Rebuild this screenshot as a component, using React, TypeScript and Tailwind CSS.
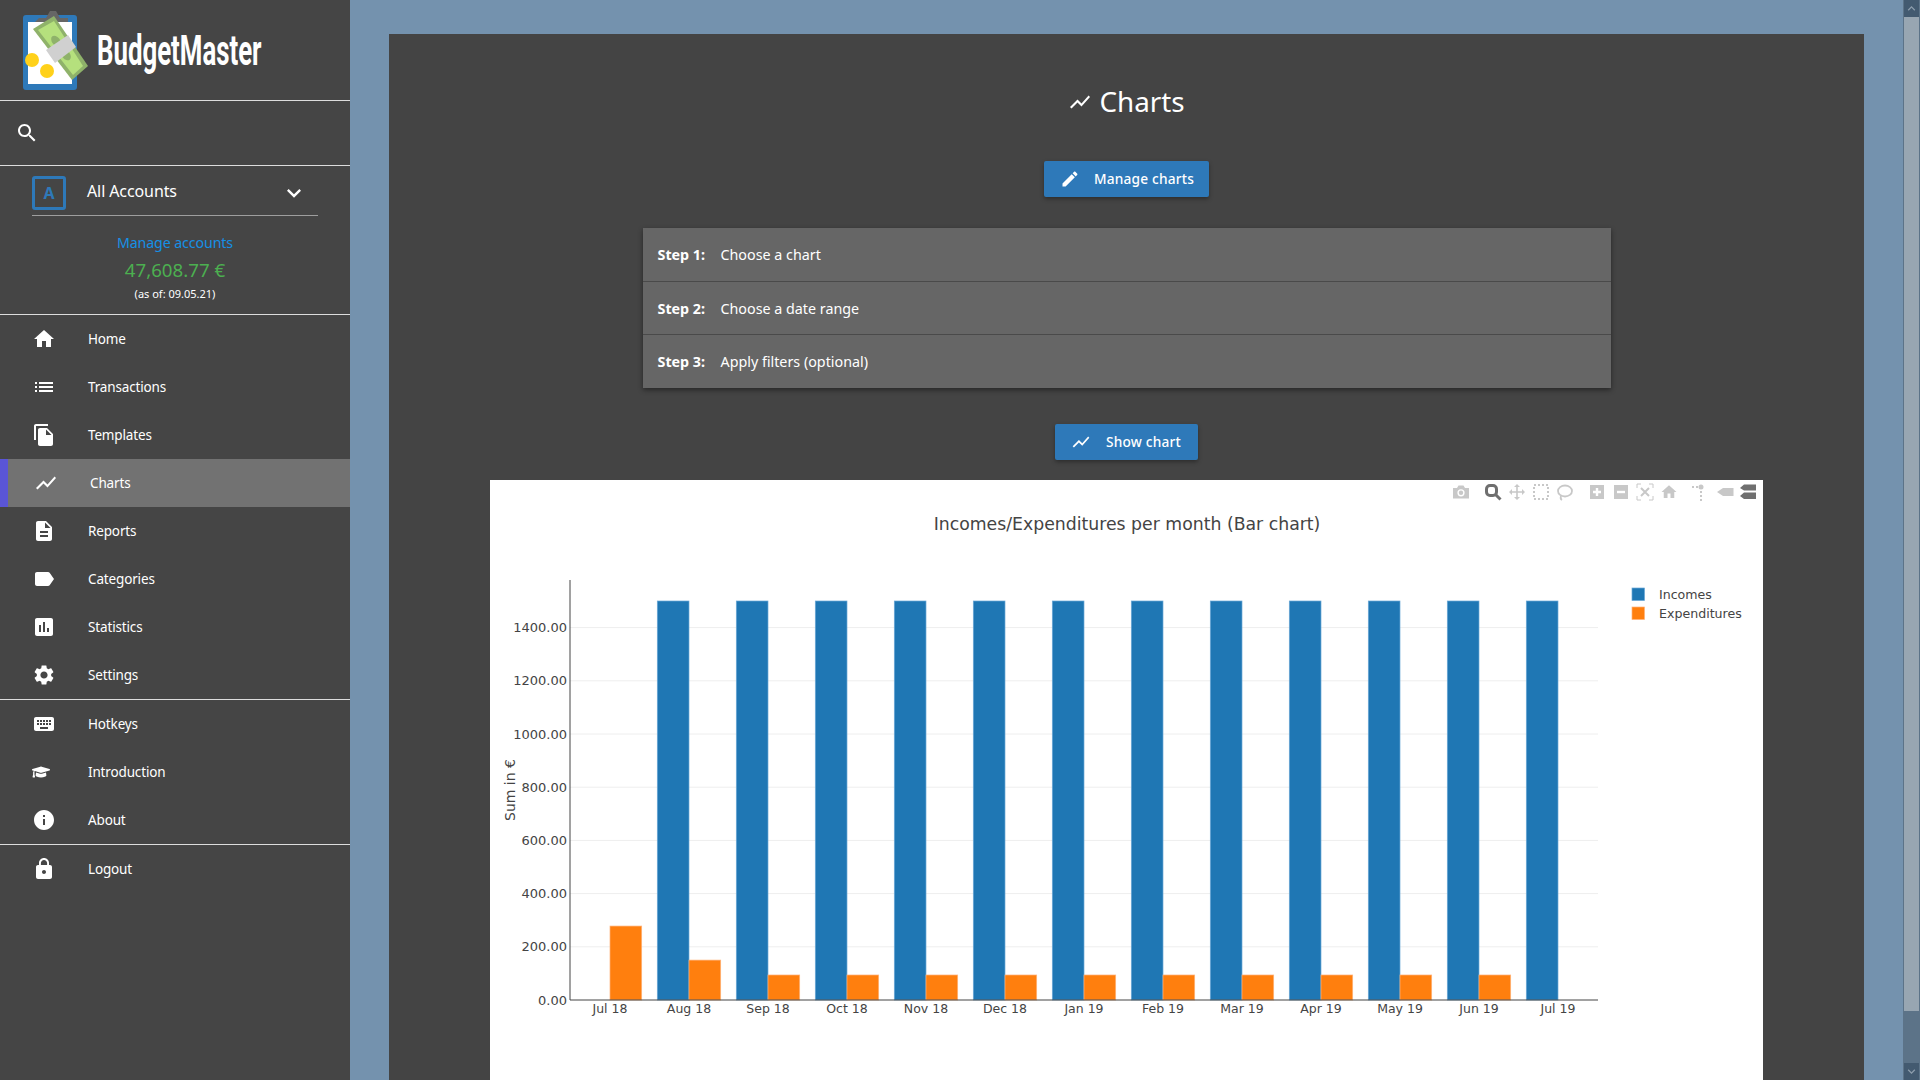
import { FaGraduationCap } from 'react-icons/fa';

const ICONS = {
  home: 'M10 20v-6h4v6h5v-8h3L12 3 2 12h3v8z',
  list: 'M3 13h2v-2H3v2zm0 4h2v-2H3v2zm0-8h2V7H3v2zm4 4h14v-2H7v2zm0 4h14v-2H7v2zM7 7v2h14V7H7z',
  copy: 'M16 1H4c-1.1 0-2 .9-2 2v14h2V3h12V1zm-1 4l6 6v10c0 1.1-.9 2-2 2H7.99C6.89 23 6 22.1 6 21l.01-14c0-1.1.89-2 1.99-2h7zm-1 7h5.5L14 6.5V12z',
  chart: 'M3.5 18.49l6-6.01 4 4L22 6.92l-1.41-1.41-7.09 7.97-4-4L2 16.99z',
  report: 'M14 2H6c-1.1 0-1.99.9-1.99 2L4 20c0 1.1.89 2 1.99 2H18c1.1 0 2-.9 2-2V8l-6-6zm2 16H8v-2h8v2zm0-4H8v-2h8v2zm-3-5V3.5L18.5 9H13z',
  label: 'M17.63 5.84C17.27 5.33 16.67 5 16 5L5 5.01C3.9 5.01 3 5.9 3 7v10c0 1.1.9 1.99 2 1.99L16 19c.67 0 1.27-.33 1.63-.84L22 12l-4.37-6.16z',
  stats: 'M19 3H5c-1.1 0-2 .9-2 2v14c0 1.1.9 2 2 2h14c1.1 0 2-.9 2-2V5c0-1.1-.9-2-2-2zM9 17H7v-7h2v7zm4 0h-2V7h2v10zm4 0h-2v-4h2v4z',
  settings: 'M19.14 12.94c.04-.3.06-.61.06-.94 0-.32-.02-.64-.07-.94l2.03-1.58c.18-.14.23-.41.12-.61l-1.92-3.32c-.12-.22-.37-.29-.59-.22l-2.39.96c-.5-.38-1.03-.7-1.62-.94l-.36-2.54c-.04-.24-.24-.41-.48-.41h-3.84c-.24 0-.43.17-.47.41l-.36 2.54c-.59.24-1.13.57-1.62.94l-2.39-.96c-.22-.08-.47 0-.59.22L2.74 8.87c-.12.21-.08.47.12.61l2.03 1.58c-.05.3-.09.63-.09.94s.02.64.07.94l-2.03 1.58c-.18.14-.23.41-.12.61l1.92 3.32c.12.22.37.29.59.22l2.39-.96c.5.38 1.03.7 1.62.94l.36 2.54c.05.24.24.41.48.41h3.84c.24 0 .44-.17.47-.41l.36-2.54c.59-.24 1.13-.56 1.62-.94l2.39.96c.22.08.47 0 .59-.22l1.92-3.32c.12-.22.07-.47-.12-.61l-2.01-1.58zM12 15.6c-1.98 0-3.6-1.62-3.6-3.6s1.62-3.6 3.6-3.6 3.6 1.62 3.6 3.6-1.62 3.6-3.6 3.6z',
  keyboard: 'M20 5H4c-1.1 0-1.99.9-1.99 2L2 17c0 1.1.9 2 2 2h16c1.1 0 2-.9 2-2V7c0-1.1-.9-2-2-2zm-9 3h2v2h-2V8zm0 3h2v2h-2v-2zM8 8h2v2H8V8zm0 3h2v2H8v-2zm-1 2H5v-2h2v2zm0-3H5V8h2v2zm9 7H8v-2h8v2zm0-4h-2v-2h2v2zm0-3h-2V8h2v2zm3 3h-2v-2h2v2zm0-3h-2V8h2v2z',
  info: 'M12 2C6.48 2 2 6.48 2 12s4.48 10 10 10 10-4.48 10-10S17.52 2 12 2zm1 15h-2v-6h2v6zm0-8h-2V7h2v2z',
  lock: 'M18 8h-1V6c0-2.76-2.24-5-5-5S7 3.24 7 6v2H6c-1.1 0-2 .9-2 2v10c0 1.1.9 2 2 2h12c1.1 0 2-.9 2-2V10c0-1.1-.9-2-2-2zm-6 9c-1.1 0-2-.9-2-2s.9-2 2-2 2 .9 2 2-.9 2-2 2zm3.1-9H8.9V6c0-1.71 1.39-3.1 3.1-3.1 1.71 0 3.1 1.39 3.1 3.1v2z',
  search: 'M15.5 14h-.79l-.28-.27C15.41 12.59 16 11.11 16 9.5 16 5.91 13.09 3 9.5 3S3 5.91 3 9.5 5.91 16 9.5 16c1.61 0 3.09-.59 4.23-1.57l.27.28v.79l5 4.99L20.49 19l-4.99-5zm-6 0C7.01 14 5 11.99 5 9.5S7.01 5 9.5 5 14 7.01 14 9.5 11.99 14 9.5 14z',
  edit: 'M3 17.25V21h3.75L17.81 9.94l-3.75-3.75L3 17.25zM20.71 7.04c.39-.39.39-1.02 0-1.41l-2.34-2.34c-.39-.39-1.02-.39-1.41 0l-1.83 1.83 3.75 3.75 1.83-1.83z',
  chevron: 'M7.41 8.59L12 13.17l4.59-4.58L18 10l-6 6-6-6 1.41-1.41z',
};

type IconName = keyof typeof ICONS;

function Icon({ name, className }: { name: IconName; className?: string }) {
  return (
    <svg viewBox="0 0 24 24" fill="currentColor" className={className}>
      <path d={ICONS[name]} />
    </svg>
  );
}

function Logo() {
  return (
    <svg viewBox="20 8 70 84" className="w-[70px] h-[84px] shrink-0">
      <rect x="23" y="15" width="54" height="75" rx="3" fill="#2e79b9" />
      <rect x="28" y="22" width="44" height="62" fill="#ffffff" />
      <path d="M35 22 L39 18 H46 L50 11 L56 11 L60 18 H68 L68 22 Z" fill="#666666" />
      <polygon points="54,16 33,29 72,80 88,66" fill="#8fb26a" />
      <polygon points="54,21 38,30 73,75 83,66" fill="#b5e07d" />
      <ellipse cx="56" cy="41" rx="4" ry="6" fill="#8fb26a" transform="rotate(-38 56 41)" />
      <ellipse cx="66" cy="55" rx="4" ry="6" fill="#8fb26a" transform="rotate(-38 66 55)" />
      <polygon points="46,50 68,35 76,47 55,63" fill="#d0d0d0" />
      <circle cx="32" cy="60" r="7" fill="#ffd11a" />
      <circle cx="47" cy="71" r="7" fill="#ffd11a" />
    </svg>
  );
}

function NavItem({ icon, label, selected }: { icon: IconName | 'cap'; label: string; selected?: boolean }) {
  return (
    <div
      className={`h-[48px] flex items-center text-[13.5px] tracking-[-0.15px] text-white ${
        selected ? 'bg-[#727272] border-l-[8px] border-[#5a55d6] pl-[26px]' : 'pl-[32px]'
      }`}
    >
      <div className="w-[24px] h-[24px] flex items-center">
        {icon === 'cap' ? <FaGraduationCap size={18} /> : <Icon name={icon} className="w-[24px] h-[24px]" />}
      </div>
      <span className="ml-[32px]">{label}</span>
    </div>
  );
}

function Sidebar() {
  return (
    <aside className="w-[350px] shrink-0 bg-[#454545] text-white">
      <div className="h-[101px] border-b border-[#dddddd] flex items-center pl-[20px]">
        <Logo />
        <span className="ml-[7px] mt-[1px] font-['Roboto',sans-serif] font-bold text-[42px] leading-none origin-left scale-x-[0.614] whitespace-nowrap">
          BudgetMaster
        </span>
      </div>
      <div className="h-[65px] border-b border-[#dddddd] flex items-center pl-[15px]">
        <Icon name="search" className="w-[24px] h-[24px]" />
      </div>
      <div className="h-[149px] border-b border-[#dddddd]">
        <div className="mx-[32px] h-[50px] border-b border-[#9e9e9e] pt-[10px] flex items-start">
          <div className="w-[34px] h-[34px] rounded-[3px] border-[3px] border-[#2e79b9] flex items-center justify-center text-[#2e79b9] font-bold text-[16px]">
            A
          </div>
          <span className="ml-[21px] h-[30px] leading-[30px] text-[16px] tracking-[-0.1px] grow">All Accounts</span>
          <Icon name="chevron" className="w-[28px] h-[28px] mr-[10px] mt-[3px]" />
        </div>
        <div className="mt-[16px] h-[22px] leading-[22px] text-center text-[14.2px] tracking-[-0.1px] text-[#1590e6]">Manage accounts</div>
        <div className="mt-[2px] h-[28px] leading-[28px] text-center text-[18.7px] text-[#4caf50]">47,608.77 €</div>
        <div className="mt-[1px] h-[18px] leading-[18px] text-center text-[11px]">(as of: 09.05.21)</div>
      </div>
      <nav className="border-b border-[#dddddd]">
        <NavItem icon="home" label="Home" />
        <NavItem icon="list" label="Transactions" />
        <NavItem icon="copy" label="Templates" />
        <NavItem icon="chart" label="Charts" selected />
        <NavItem icon="report" label="Reports" />
        <NavItem icon="label" label="Categories" />
        <NavItem icon="stats" label="Statistics" />
        <NavItem icon="settings" label="Settings" />
      </nav>
      <nav className="border-b border-[#dddddd]">
        <NavItem icon="keyboard" label="Hotkeys" />
        <NavItem icon="cap" label="Introduction" />
        <NavItem icon="info" label="About" />
      </nav>
      <NavItem icon="lock" label="Logout" />
    </aside>
  );
}

function Button({ icon, label, className }: { icon: IconName; label: string; className: string }) {
  return (
    <div
      className={`h-[36px] rounded-[2px] bg-[#2e79b9] text-white text-[13.7px] font-medium flex items-center shadow-[0_2px_4px_rgba(0,0,0,0.35)] ${className}`}
    >
      <Icon name={icon} className="w-[20px] h-[20px] shrink-0" />
      <span className="tracking-[0.2px]">{label}</span>
    </div>
  );
}

const STEPS = [
  ['Step 1:', 'Choose a chart'],
  ['Step 2:', 'Choose a date range'],
  ['Step 3:', 'Apply filters (optional)'],
];

const MONTHS = ['Jul 18', 'Aug 18', 'Sep 18', 'Oct 18', 'Nov 18', 'Dec 18', 'Jan 19', 'Feb 19', 'Mar 19', 'Apr 19', 'May 19', 'Jun 19', 'Jul 19'];
const INCOMES = [0, 1500, 1500, 1500, 1500, 1500, 1500, 1500, 1500, 1500, 1500, 1500, 1500];
const EXPENSES = [278, 150, 94, 94, 94, 94, 94, 94, 94, 94, 94, 94, 0];
const TICKS = [0, 200, 400, 600, 800, 1000, 1200, 1400];

// chart coordinates are counted from the top left corner of the white box
const AXIS_Y = 520;
const AXIS_X = 80;
const PX_PER_UNIT = 0.266;
const GROUP = 79;
const FIRST = 120;
const BAR = 31.7;

function ModeBar() {
  const gray = '#c8c8c8';
  const dark = '#6f6f6f';
  return (
    <g>
      <g transform="translate(963 4)" fill={gray}>
        <path d="M0 4h4l1.5-2.5h5L12 4h4v10.500H0z" />
        <circle cx="8" cy="8.800" r="3.600" fill="#ffffff" />
        <circle cx="8" cy="8.800" r="2.200" />
      </g>
      <g transform="translate(995 4)" fill="none" stroke={dark}>
        <rect x="1.500" y="1.500" width="10" height="10" rx="3.500" strokeWidth="3" />
        <path d="M11 11 L15.500 15.500" strokeWidth="3" />
      </g>
      <g transform="translate(1027 12)" fill={gray} stroke={gray}>
        <path d="M-6.500 0H6.500M0 -6.500V6.500" strokeWidth="1.600" fill="none" />
        <path d="M-8 0l3-3v6zM8 0l-3-3v6zM0 -8l-3 3h6zM0 8l-3-3h6z" stroke="none" />
      </g>
      <rect x="1044" y="5" width="14" height="14" fill="none" stroke={gray} strokeWidth="2" strokeDasharray="2 2" />
      <g transform="translate(1075 12)" fill="none" stroke={gray} strokeWidth="1.800">
        <ellipse cx="0" cy="-1" rx="7" ry="5.500" />
        <path d="M-4 4 Q-5 7 -3 8" />
      </g>
      <g transform="translate(1100 5)">
        <rect width="14" height="14" fill={gray} />
        <path d="M3 7h8M7 3v8" stroke="#ffffff" strokeWidth="2.400" />
      </g>
      <g transform="translate(1124 5)">
        <rect width="14" height="14" fill={gray} />
        <path d="M3 7h8" stroke="#ffffff" strokeWidth="2.400" />
      </g>
      <g transform="translate(1147 4)" fill="none" stroke={gray}>
        <path d="M0 4V0H4M12 0H16V4M16 12V16H12M4 16H0V12" strokeWidth="1" />
        <path d="M4 4L12 12M12 4L4 12" strokeWidth="2" />
      </g>
      <path transform="translate(1170 3) scale(0.75)" d={ICONS.home} fill={gray} />
      <g transform="translate(1202 4)" fill={gray}>
        <circle cx="9" cy="3" r="2.500" />
        <rect x="0" y="2" width="2" height="2" />
        <rect x="4" y="2" width="2" height="2" />
        <rect x="8" y="7" width="2" height="2" />
        <rect x="8" y="11" width="2" height="2" />
        <rect x="8" y="15" width="2" height="2" />
      </g>
      <path d="M1227 12 L1233 8 H1243.500 V16 H1233 Z" fill={gray} />
      <path d="M1250 8 L1254 4.500 H1266 V10.500 H1254 Z M1250 16 L1254 12.500 H1266 V19 H1254 Z" fill={dark} />
    </g>
  );
}

function BarChart() {
  return (
    <div className="bg-white mt-[20px] w-[1273px] h-[600px] ml-[101px]">
      <svg width="1273" height="600" className="block font-['DejaVu_Sans',sans-serif]">
        <text x="637" y="50" textAnchor="middle" fontSize="17.300" fill="#444444">
          Incomes/Expenditures per month (Bar chart)
        </text>
        <ModeBar />
        {TICKS.slice(1).map((t) => (
          <line key={t} x1={AXIS_X} x2="1108" y1={AXIS_Y - t * PX_PER_UNIT} y2={AXIS_Y - t * PX_PER_UNIT} stroke="#eeeeee" />
        ))}
        {MONTHS.map((m, i) => {
          const cx = FIRST + i * GROUP;
          const incH = INCOMES[i] * PX_PER_UNIT;
          const expH = EXPENSES[i] * PX_PER_UNIT;
          return (
            <g key={m}>
              {incH > 0 && (
                <rect x={cx - BAR} y={AXIS_Y - incH} width={BAR} height={incH} fill="#1f77b4" stroke="#6aa8d6" strokeWidth="0.7" />
              )}
              {expH > 0 && (
                <rect x={cx} y={AXIS_Y - expH} width={BAR} height={expH} fill="#ff7f0e" stroke="#ffb27a" strokeWidth="0.7" />
              )}
              <text x={cx} y={AXIS_Y + 13} textAnchor="middle" fontSize="12.500" fill="#444444">
                {m}
              </text>
            </g>
          );
        })}
        {TICKS.map((t) => (
          <text key={t} x={AXIS_X - 3} y={AXIS_Y - t * PX_PER_UNIT + 4.500} textAnchor="end" fontSize="13" fill="#444444">
            {t.toFixed(2)}
          </text>
        ))}
        <line x1={AXIS_X} x2="1108" y1={AXIS_Y} y2={AXIS_Y} stroke="#444444" />
        <line x1={AXIS_X} x2={AXIS_X} y1="100" y2={AXIS_Y} stroke="#444444" />
        <text transform="translate(25 310) rotate(-90)" textAnchor="middle" fontSize="14" fill="#444444">
          Sum in €
        </text>
        <rect x="1142" y="108" width="12.500" height="12.500" fill="#1f77b4" stroke="#6aa8d6" strokeWidth="0.7" />
        <rect x="1142" y="127" width="12.500" height="12.500" fill="#ff7f0e" stroke="#ffb27a" strokeWidth="0.7" />
        <text x="1169" y="119" fontSize="12.600" fill="#444444">Incomes</text>
        <text x="1169" y="138" fontSize="12.600" fill="#444444">Expenditures</text>
      </svg>
    </div>
  );
}

function Scrollbar() {
  return (
    <div className="w-[17px] shrink-0 bg-[#5c7388] flex flex-col items-center">
      <div className="w-[15px] h-[17px] bg-[#435a70] flex items-center justify-center">
        <Icon name="chevron" className="w-[15px] h-[15px] text-[#8d9dac] rotate-180" />
      </div>
      <div className="w-[15px] h-[994px] bg-[#98a6b2]" />
      <div className="w-[15px] h-[17px] bg-[#435a70] mt-auto flex items-center justify-center">
        <Icon name="chevron" className="w-[15px] h-[15px] text-[#8d9dac]" />
      </div>
    </div>
  );
}

export default function App() {
  return (
    <div className="h-screen overflow-hidden flex bg-[#7492ae] font-['Noto_Sans',sans-serif]">
      <Sidebar />
      <main className="grow min-w-0 pl-[39px] pr-[39px] pt-[34px]">
        <div className="bg-[#444444] pt-[45px] text-white h-[1100px]">
          <h1 className="h-[46px] flex items-center justify-center text-[27.8px] font-normal">
            <Icon name="chart" className="w-[24px] h-[24px] mr-[7px]" />
            Charts
          </h1>
          <Button icon="edit" label="Manage charts" className="mt-[36px] w-[165px] mx-auto pl-[16px] gap-[14px]" />
          <div className="mt-[31px] w-[968px] mx-auto h-[160px] bg-[#666666] flex flex-col shadow-[0_2px_5px_rgba(0,0,0,0.45)]">
            {STEPS.map(([step, text], i) => (
              <div key={step} className={`flex-1 flex items-center pl-[15px] pt-[1px] text-[14.3px] ${i < 2 ? 'border-b border-[#4a4a4a]' : ''}`}>
                <span className="w-[63px] font-bold">{step}</span>
                <span>{text}</span>
              </div>
            ))}
          </div>
          <Button icon="chart" label="Show chart" className="mt-[36px] w-[143px] mx-auto pl-[16px] gap-[15px]" />
          <BarChart />
        </div>
      </main>
      <Scrollbar />
    </div>
  );
}
